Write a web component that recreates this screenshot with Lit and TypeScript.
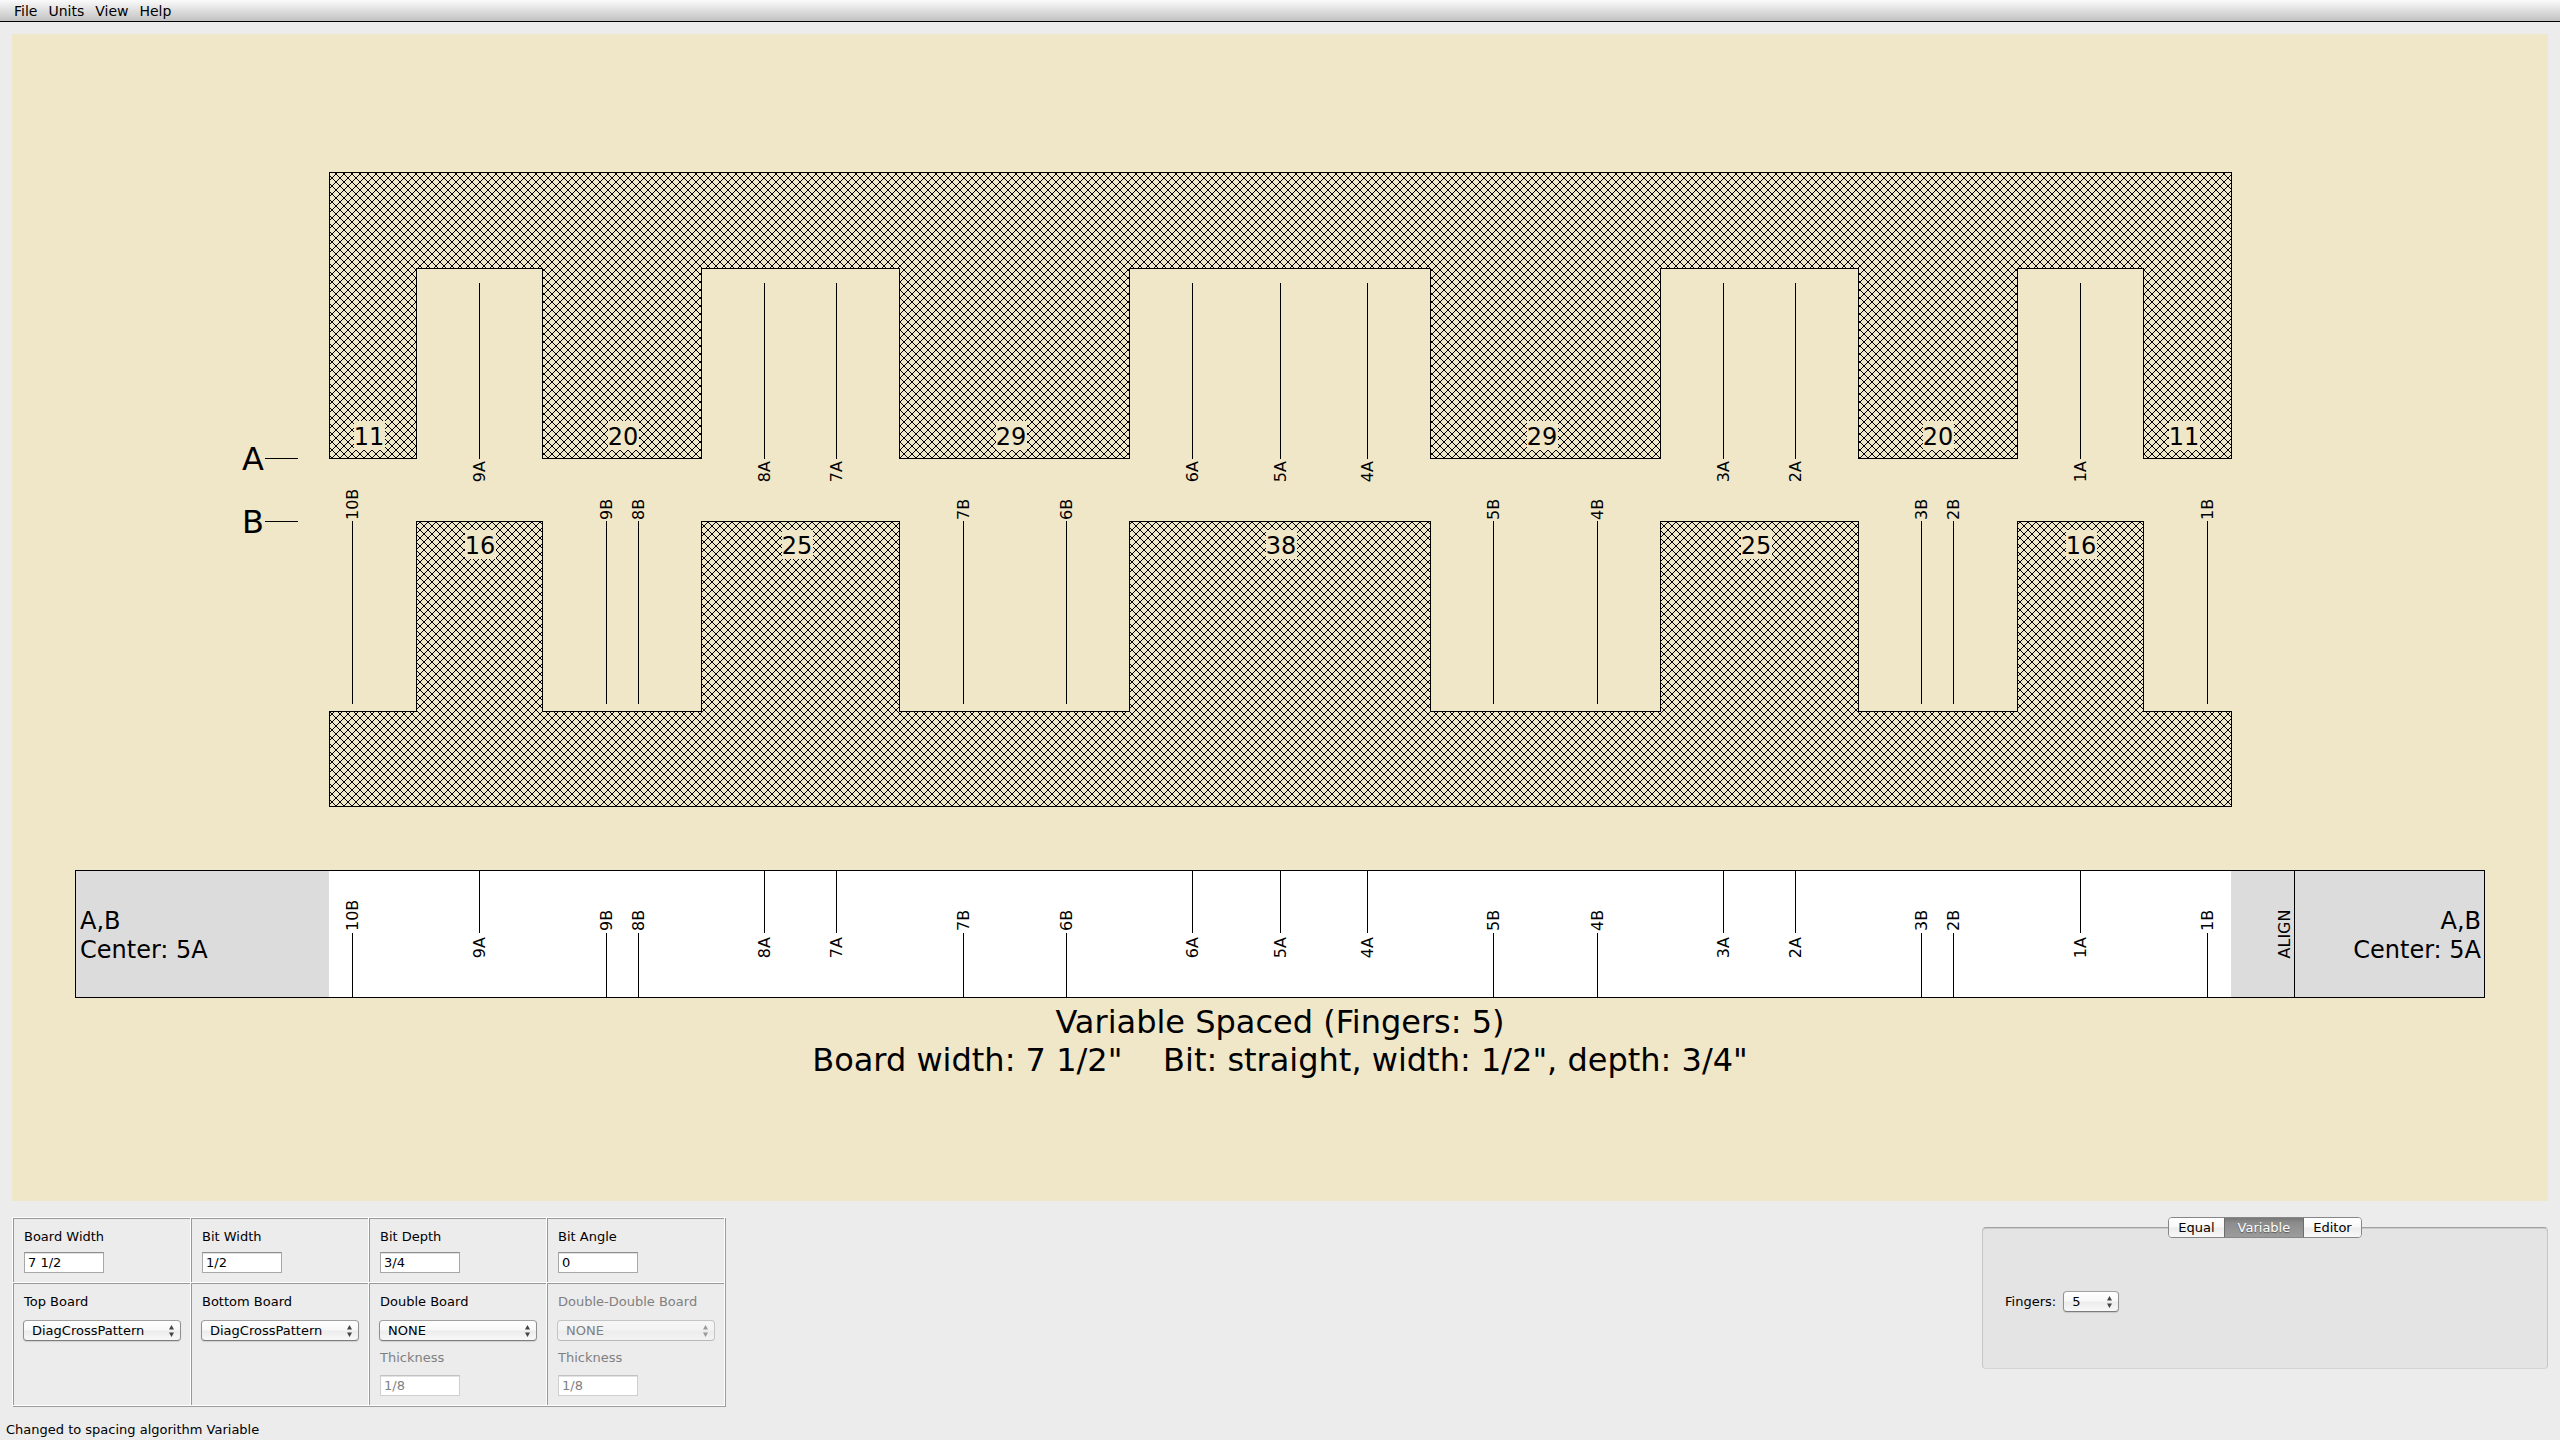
import { LitElement, html, svg, css, nothing } from 'lit';
import { customElement, property, state } from 'lit/decorators.js';
import { classMap } from 'lit/directives/class-map.js';

/* ---------- joint drawing ---------- */

/** Board width in 1/32 inch increments. */
const BOARD_UNITS = 240;

/** Fingers from left to right, alternating top board / bottom board. */
const FINGERS = [11, 16, 20, 25, 29, 38, 29, 25, 20, 16, 11];

/** Router passes for each board, as increments from the left edge. */
const PASSES_A = [19, 55, 64, 109, 120, 131, 176, 185, 221];
const PASSES_B = [3, 35, 39, 80, 93, 147, 160, 201, 205, 237];

const VIEW_W = 2536;
const VIEW_H = 1167;
const BOARD_X = 317;
const BOARD_W = 1902;
const TOP = { edge: 138, root: 234, tip: 424 };
const BOTTOM = { tip: 487, root: 677, edge: 772 };
const STRIP = { x: 63, y: 836, w: 2409, h: 127, mid: 899, align: 2282 };

const toX = (units: number) => BOARD_X + Math.floor((units * BOARD_W) / BOARD_UNITS);

@customElement('joint-drawing')
export class JointDrawing extends LitElement {
  static styles = css`
    :host {
      display: block;
      background: #f0e6c8;
      font-family: 'DejaVu Sans', 'Noto Sans', sans-serif;
    }
    .drawing {
      display: block;
      width: 100%;
      height: auto;
    }
    .line {
      fill: none;
      stroke: #000;
      stroke-width: 1;
      shape-rendering: crispEdges;
    }
    .board {
      stroke: #000;
      stroke-width: 1;
      shape-rendering: crispEdges;
    }
    .paper {
      fill: #f0e6c8;
    }
    .blank {
      fill: #fff;
    }
    .margin {
      fill: #dcdcdc;
    }
    .pass {
      font-size: 16px;
    }
    .size {
      font-size: 24px;
    }
    .title {
      font-size: 32px;
      white-space: pre;
    }
    .middle {
      text-anchor: middle;
    }
    .end {
      text-anchor: end;
    }
  `;

  private fingers() {
    let start = 0;
    return FINGERS.map((size, i) => {
      const finger = { size, start, end: start + size, top: i % 2 === 0 };
      start += size;
      return finger;
    });
  }

  private boardPath(top: boolean) {
    const { tip, root, edge } = top ? TOP : BOTTOM;
    let d = `M${BOARD_X + 0.5} ${edge + 0.5}`;
    for (const f of this.fingers()) {
      const y = (f.top === top ? tip : root) + 0.5;
      d += `L${toX(f.start) + 0.5} ${y}L${toX(f.end) + 0.5} ${y}`;
    }
    return `${d}L${toX(BOARD_UNITS) + 0.5} ${edge + 0.5}Z`;
  }

  private mark(units: number, y1: number, y2: number) {
    const x = toX(units) + 0.5;
    return svg`<path class="line" d="M${x} ${y1}V${y2}"></path>`;
  }

  private upright(text: string, x: number, y: number, end: boolean) {
    return svg`<text class=${end ? 'pass end' : 'pass'} transform="translate(${x} ${y}) rotate(-90)">${text}</text>`;
  }

  private sizeLabel(f: { size: number; start: number; top: boolean }) {
    const x = toX(f.start + Math.floor(f.size / 2)) + 1;
    const y = f.top ? 387 : 496;
    return svg`
      <rect class="paper" x=${x - 15} y=${y} width="31" height="29"></rect>
      <text class="size middle" x=${x} y=${y + 24}>${f.size}</text>`;
  }

  render() {
    const s = STRIP;
    const right = s.x + s.w;
    const boardEnd = toX(BOARD_UNITS);
    return html`
      <svg class="drawing" viewBox="0 0 ${VIEW_W} ${VIEW_H}" role="img" aria-label="Box joint layout">
        <defs>
          <pattern id="diag-cross" width="8" height="8" patternUnits="userSpaceOnUse">
            ${[0, 1, 2, 3, 4, 5, 6, 7].map(
              (i) => svg`
                <rect x=${i} y=${i} width="1" height="1" shape-rendering="crispEdges"></rect>
                <rect x=${7 - i} y=${i} width="1" height="1" shape-rendering="crispEdges"></rect>`,
            )}
          </pattern>
        </defs>

        <path class="board" fill="url(#diag-cross)" d=${this.boardPath(true)}></path>
        <path class="board" fill="url(#diag-cross)" d=${this.boardPath(false)}></path>
        ${this.fingers().map((f) => this.sizeLabel(f))}

        <text class="title end" x="252" y="436">A</text>
        <path class="line" d="M253 424.5H286"></path>
        <text class="title end" x="252" y="499">B</text>
        <path class="line" d="M253 487.5H286"></path>

        ${PASSES_A.map((u, i) => {
          const name = `${PASSES_A.length - i}A`;
          return svg`${this.mark(u, 249, 425)}${this.upright(name, toX(u) + 6, 427, true)}`;
        })}
        ${PASSES_B.map((u, i) => {
          const name = `${PASSES_B.length - i}B`;
          return svg`${this.mark(u, 487, 670)}${this.upright(name, toX(u) + 6, 486, false)}`;
        })}

        <rect class="blank" x=${s.x} y=${s.y} width=${s.w} height=${s.h}></rect>
        <rect class="margin" x=${s.x} y=${s.y} width=${BOARD_X - s.x} height=${s.h}></rect>
        <rect class="margin" x=${boardEnd} y=${s.y} width=${right - boardEnd} height=${s.h}></rect>
        <rect class="line" x=${s.x + 0.5} y=${s.y + 0.5} width=${s.w} height=${s.h}></rect>
        ${PASSES_A.map(
          (u, i) =>
            svg`${this.mark(u, s.y, s.mid)}${this.upright(`${PASSES_A.length - i}A`, toX(u) + 6, s.mid + 4, true)}`,
        )}
        ${PASSES_B.map(
          (u, i) =>
            svg`${this.mark(u, s.mid, s.y + s.h)}${this.upright(`${PASSES_B.length - i}B`, toX(u) + 6, s.mid - 2, false)}`,
        )}
        <path class="line" d="M${s.align + 0.5} ${s.y}V${s.y + s.h}"></path>
        <text class="pass middle" transform="translate(${s.align - 4} ${s.mid + 1}) rotate(-90)">ALIGN</text>

        <text class="size" x="68" y="895">A,B</text>
        <text class="size" x="68" y="924">Center: 5A</text>
        <text class="size end" x=${right - 3} y="895">A,B</text>
        <text class="size end" x=${right - 3} y="924">Center: 5A</text>

        <text class="title middle" x=${VIEW_W / 2} y="999">Variable Spaced (Fingers: 5)</text>
        <text class="title middle" x=${VIEW_W / 2} y="1037">Board width: 7 1/2"    Bit: straight, width: 1/2", depth: 3/4"</text>
      </svg>
    `;
  }
}

/* ---------- form controls ---------- */

const controlFont = css`
  :host {
    font-family: 'DejaVu Sans', 'Noto Sans', sans-serif;
    font-size: 13px;
    line-height: 16px;
    color: #000;
  }
`;

@customElement('text-field')
export class TextField extends LitElement {
  static styles = [
    controlFont,
    css`
      :host {
        display: flex;
        flex-direction: column;
        align-items: flex-start;
        gap: var(--field-gap, 9px);
      }
      .label.off {
        color: #808080;
      }
      .input {
        box-sizing: border-box;
        width: 80px;
        height: 21px;
        padding: 0 3px;
        border: 1px solid #a8a8a8;
        border-top-color: #8e8e8e;
        background: #fff;
        box-shadow: inset 0 1px 0 #e2e2e2;
        font: inherit;
        color: inherit;
      }
      .input:disabled {
        border-color: #cfcfcf;
        border-top-color: #c2c2c2;
        color: #808080;
      }
    `,
  ];

  @property() label = '';
  @property() value = '';
  @property({ type: Boolean }) disabled = false;

  render() {
    return html`
      <label class=${classMap({ label: true, off: this.disabled })} for="input">${this.label}</label>
      <input class="input" id="input" type="text" .value=${this.value} ?disabled=${this.disabled} />
    `;
  }
}

@customElement('popup-field')
export class PopupField extends LitElement {
  static styles = [
    controlFont,
    css`
      :host {
        display: flex;
        flex-direction: column;
        gap: 10px;
      }
      :host([inline]) {
        flex-direction: row;
        align-items: center;
        gap: 7px;
      }
      .label.off {
        color: #808080;
      }
      .popup {
        position: relative;
        margin: 0 9px 0 -1px;
      }
      :host([inline]) .popup {
        width: 56px;
        margin: 0;
      }
      .select {
        appearance: none;
        display: block;
        box-sizing: border-box;
        width: 100%;
        height: 21px;
        padding: 0 16px 0 8px;
        border: 1px solid #8f8f8f;
        border-top-color: #a0a0a0;
        border-bottom-color: #7c7c7c;
        border-radius: 4px;
        background: linear-gradient(#fff, #f8f8f8 48%, #ececec 52%, #f8f8f8);
        box-shadow: 0 1px 1px rgba(0, 0, 0, 0.12);
        font: inherit;
        color: inherit;
      }
      .select:disabled {
        opacity: 1;
        border-color: #c4c4c4;
        border-bottom-color: #b8b8b8;
        background: linear-gradient(#f6f6f6, #f3f3f3 48%, #ececec 52%, #f3f3f3);
        box-shadow: none;
        color: #808080;
      }
      .arrows {
        position: absolute;
        right: 6px;
        top: 5px;
        width: 7px;
        height: 12px;
        fill: #444;
        pointer-events: none;
      }
      .arrows.off {
        fill: #999;
      }
    `,
  ];

  @property() label = '';
  @property({ type: Array }) options: string[] = [];
  @property({ type: Boolean }) disabled = false;

  render() {
    return html`
      <label class=${classMap({ label: true, off: this.disabled })} for="select">${this.label}</label>
      <div class="popup">
        <select class="select" id="select" ?disabled=${this.disabled}>
          ${this.options.map((o) => html`<option>${o}</option>`)}
        </select>
        <svg class=${classMap({ arrows: true, off: this.disabled })} viewBox="0 0 7 12" aria-hidden="true">
          <path d="M3.5 0L6 4.5H1ZM3.5 12L6 7.5H1Z"></path>
        </svg>
      </div>
    `;
  }
}

/* ---------- application ---------- */

const MENUS = ['File', 'Units', 'View', 'Help'];
const TABS = ['Equal', 'Variable', 'Editor'];

const SIZES = [
  { label: 'Board Width', value: '7 1/2' },
  { label: 'Bit Width', value: '1/2' },
  { label: 'Bit Depth', value: '3/4' },
  { label: 'Bit Angle', value: '0' },
];

const BOARDS = [
  { label: 'Top Board', option: 'DiagCrossPattern', disabled: false, thickness: '' },
  { label: 'Bottom Board', option: 'DiagCrossPattern', disabled: false, thickness: '' },
  { label: 'Double Board', option: 'NONE', disabled: false, thickness: '1/8' },
  { label: 'Double-Double Board', option: 'NONE', disabled: true, thickness: '1/8' },
];

@customElement('app-root')
export class AppRoot extends LitElement {
  static styles = [
    controlFont,
    css`
      :host {
        display: flex;
        flex-direction: column;
        min-height: 100vh;
        background: #ececec;
      }
      .menubar {
        display: flex;
        gap: 11px;
        height: 21px;
        padding-left: 14px;
        border-bottom: 1px solid #000;
        background: linear-gradient(#fafafa, #c2c2c2);
      }
      .menu {
        padding: 0;
        border: 0;
        background: none;
        font: inherit;
        font-size: 14px;
        color: inherit;
      }
      .canvas {
        margin: 12px 12px 0;
      }
      .panels {
        display: flex;
        justify-content: space-between;
        align-items: flex-start;
        padding: 16px 12px 0;
      }

      .grid {
        display: grid;
        grid-template-columns: repeat(4, 178px);
        border-right: 1px solid #fff;
        border-bottom: 1px solid #fff;
        box-shadow: 1px 1px 0 #9c9c9c;
      }
      .cell {
        display: flex;
        flex-direction: column;
        gap: 9px;
        border-top: 1px solid #fff;
        border-left: 1px solid #fff;
        box-shadow: inset 1px 1px 0 #989898;
        padding: 11px 0 9px 11px;
      }
      .cell.sizes {
        --field-gap: 7px;
      }

      .spacing {
        display: flex;
        flex-direction: column;
        align-items: center;
        width: 22%;
        min-width: 566px;
      }
      .tabs {
        position: relative;
        display: flex;
        height: 21px;
        margin-bottom: -11px;
        box-sizing: border-box;
        border: 1px solid #868686;
        border-radius: 4px;
        overflow: hidden;
      }
      .tab {
        padding: 0 9px;
        border: 0;
        background: linear-gradient(#fff, #f8f8f8 48%, #ececec 52%, #f8f8f8);
        font: inherit;
        color: inherit;
      }
      .tab.on {
        padding: 0 14px;
        background: linear-gradient(#787878, #8c8c8c 25%, #9c9c9c);
        box-shadow: inset 1px 0 0 #6c6c6c, inset -1px 0 0 #6c6c6c;
        text-shadow: 0 1px 1px #555;
        color: #fff;
      }
      .group {
        display: flex;
        align-items: center;
        align-self: stretch;
        box-sizing: border-box;
        height: 142px;
        padding: 7px 22px 0;
        border: 1px solid #c6c6c6;
        border-top-color: #a2a2a2;
        border-bottom-color: #d4d4d4;
        border-radius: 4px;
        background: #e4e4e4;
        box-shadow: inset 0 1px 0 #cacaca;
      }
      .status {
        margin-top: auto;
        padding: 0 6px 2px;
      }
    `,
  ];

  @state() private tab = 'Variable';

  render() {
    return html`
      <nav class="menubar">${MENUS.map((m) => html`<button class="menu">${m}</button>`)}</nav>
      <joint-drawing class="canvas"></joint-drawing>
      <div class="panels">
        <div class="grid">
          ${SIZES.map(
            (s) => html`
              <div class="cell sizes"><text-field .label=${s.label} .value=${s.value}></text-field></div>
            `,
          )}
          ${BOARDS.map(
            (b) => html`
              <div class="cell">
                <popup-field .label=${b.label} .options=${[b.option]} ?disabled=${b.disabled}></popup-field>
                ${b.thickness
                  ? html`<text-field label="Thickness" .value=${b.thickness} disabled></text-field>`
                  : nothing}
              </div>
            `,
          )}
        </div>
        <div class="spacing">
          <div class="tabs" role="tablist">
            ${TABS.map(
              (t) => html`
                <button
                  class=${classMap({ tab: true, on: t === this.tab })}
                  role="tab"
                  aria-selected=${t === this.tab}
                  @click=${() => (this.tab = t)}
                >${t}</button>
              `,
            )}
          </div>
          <div class="group" role="tabpanel">
            <popup-field inline label="Fingers:" .options=${['5']}></popup-field>
          </div>
        </div>
      </div>
      <div class="status" role="status">Changed to spacing algorithm Variable</div>
    `;
  }
}
